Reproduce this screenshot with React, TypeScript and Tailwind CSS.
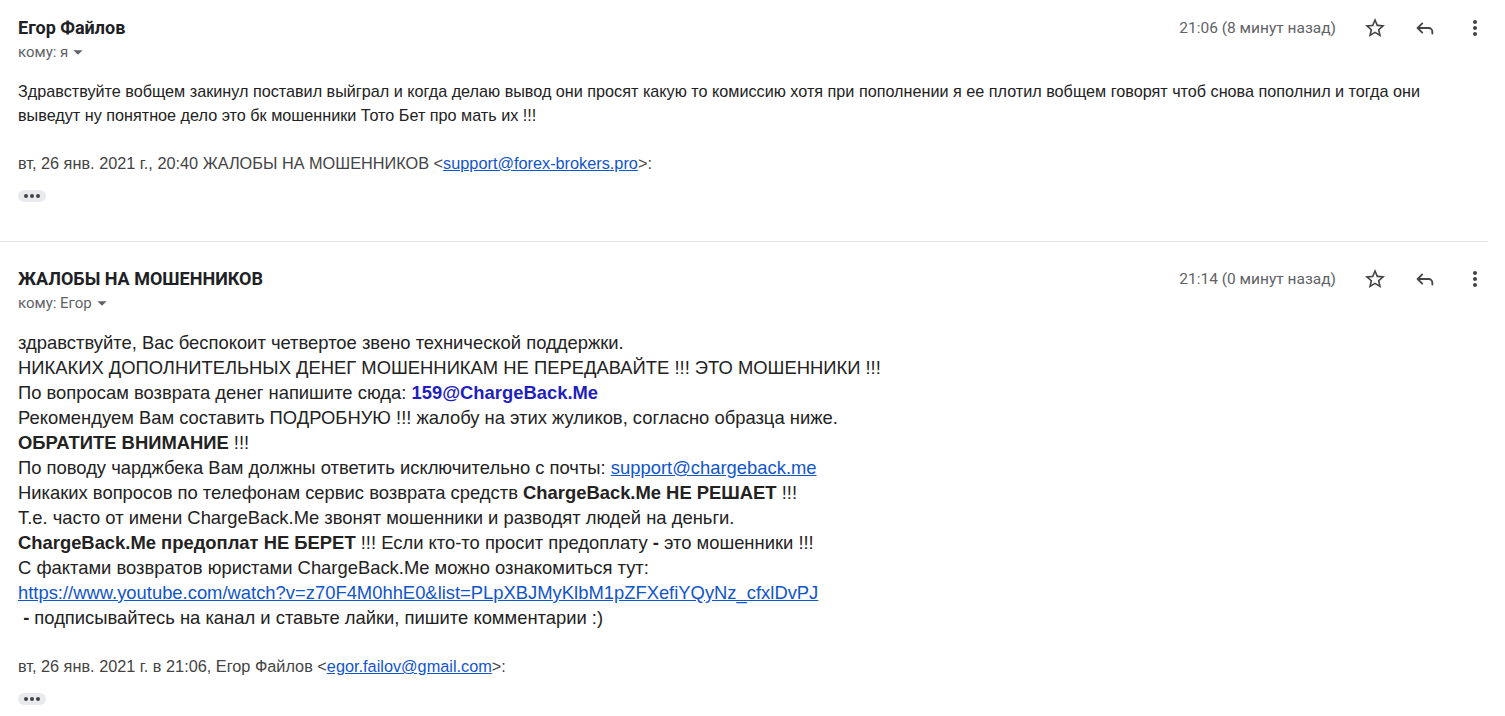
import { MdStarBorder, MdMoreVert, MdArrowDropDown } from 'react-icons/md';
import { Reply } from 'lucide-react';

const roboto = { fontFamily: 'Roboto, "Liberation Sans", sans-serif' };

function Header({ name, to, time }: { name: string; to: string; time: string }) {
  return (
    <div style={roboto}>
      <div className="flex items-center justify-between pr-[5px]">
        <span className="text-[18px] leading-[22px] font-bold text-[#202124]">{name}</span>
        <div className="flex items-center text-[#5f6368]">
          <span className="text-[15.5px] leading-[22px] mr-[14px]">{time}</span>
          <span className="w-[50px] flex justify-center text-[#444]">
            <MdStarBorder size={24} />
          </span>
          <span className="w-[50px] flex justify-center text-[#444]">
            <Reply size={22} strokeWidth={2} />
          </span>
          <span className="w-[50px] flex justify-center text-[#444]">
            <MdMoreVert size={24} />
          </span>
        </div>
      </div>
      <div className="mt-[1px] flex items-center text-[15px] leading-[20px] text-[#5f6368]">
        <span>кому: {to}</span>
        <MdArrowDropDown size={22} className="-ml-[1px]" />
      </div>
    </div>
  );
}

function Dots() {
  return (
    <div className="w-[28px] h-[12px] rounded-[6px] bg-[#e8eaed] flex items-center justify-center gap-[2px]">
      <span className="w-[4px] h-[4px] rounded-full bg-[#444]" />
      <span className="w-[4px] h-[4px] rounded-full bg-[#444]" />
      <span className="w-[4px] h-[4px] rounded-full bg-[#444]" />
    </div>
  );
}

const link = 'text-[#1155cc] underline';

export default function App() {
  return (
    <div className="w-[1505px] h-[716px] bg-white overflow-hidden" style={{ fontFamily: '"Liberation Sans", Arial, sans-serif' }}>
      {/* first message */}
      <div className="pl-[18px] pt-[16px] pb-[39px]">
        <Header name="Егор Файлов" to="я" time="21:06 (8 минут назад)" />
        <div className="mt-[16px] text-[16.2px] leading-[24px] text-[#222] pr-[60px]">
          Здравствуйте вобщем закинул поставил выйграл и когда делаю вывод они просят какую то комиссию хотя при пополнении я ее плотил вобщем говорят чтоб снова пополнил и тогда они выведут ну понятное дело это бк мошенники Тото Бет про мать их !!!
        </div>
        <div className="mt-[24px] text-[16.3px] leading-[24px] text-[#444]">
          вт, 26 янв. 2021 г., 20:40 ЖАЛОБЫ НА МОШЕННИКОВ &lt;<span className={link}>support@forex-brokers.pro</span>&gt;:
        </div>
        <div className="mt-[15px]">
          <Dots />
        </div>
      </div>

      <div className="w-[1488px] border-t border-[#e8e8e8]" />

      {/* second message */}
      <div className="pl-[18px] pt-[25px]">
        <Header name="ЖАЛОБЫ НА МОШЕННИКОВ" to="Егор" time="21:14 (0 минут назад)" />
        <div className="mt-[16px] text-[18.4px] leading-[25px] text-[#222]">
          <div>здравствуйте, Вас беспокоит четвертое звено технической поддержки.</div>
          <div>НИКАКИХ ДОПОЛНИТЕЛЬНЫХ ДЕНЕГ МОШЕННИКАМ НЕ ПЕРЕДАВАЙТЕ !!! ЭТО МОШЕННИКИ !!!</div>
          <div>
            По вопросам возврата денег напишите сюда: <b className="text-[#1f1fbf]">159@ChargeBack.Me</b>
          </div>
          <div>Рекомендуем Вам составить ПОДРОБНУЮ !!! жалобу на этих жуликов, согласно образца ниже.</div>
          <div>
            <b>ОБРАТИТЕ ВНИМАНИЕ</b> !!!
          </div>
          <div>
            По поводу чарджбека Вам должны ответить исключительно с почты: <span className={link}>support@chargeback.me</span>
          </div>
          <div>
            Никаких вопросов по телефонам сервис возврата средств <b>ChargeBack.Me НЕ РЕШАЕТ</b> !!!
          </div>
          <div>Т.е. часто от имени ChargeBack.Me звонят мошенники и разводят людей на деньги.</div>
          <div>
            <b>ChargeBack.Me предоплат НЕ БЕРЕТ</b> !!! Если кто-то просит предоплату <b>-</b> это мошенники !!!
          </div>
          <div>С фактами возвратов юристами ChargeBack.Me можно ознакомиться тут:</div>
          <div>
            <span className={link}>https://www.youtube.com/watch?v=z70F4M0hhE0&amp;list=PLpXBJMyKlbM1pZFXefiYQyNz_cfxlDvPJ</span>
          </div>
          <div>
            &nbsp;<b>-</b> подписывайтесь на канал и ставьте лайки, пишите комментарии :)
          </div>
        </div>
        <div className="mt-[24px] text-[16.3px] leading-[24px] text-[#444]">
          вт, 26 янв. 2021 г. в 21:06, Егор Файлов &lt;<span className={link}>egor.failov@gmail.com</span>&gt;:
        </div>
        <div className="mt-[15px]">
          <Dots />
        </div>
      </div>
    </div>
  );
}
